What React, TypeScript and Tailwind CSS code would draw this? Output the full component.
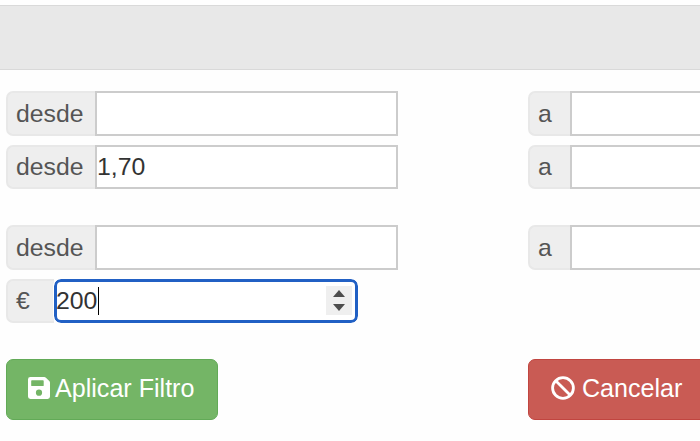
type FieldProps = {
    label: string;
    value?: string;
};

const Addon = ({ label }: { label: string }) => (
    <span className="flex h-full shrink-0 items-center rounded-l-[7px] border-2 border-r-0 border-[#e8e8e8] bg-[#eeeeee] pt-0.5 pl-2 text-[#555555]">
        {label}
    </span>
);

const FromField = ({ label, value }: FieldProps) => (
    <div className="grid h-[44.5px] w-[392px] grid-cols-[89px_1fr]">
        <Addon label={label} />
        <div className="flex items-center border-2 border-[#cccccc] bg-white pt-0.5 text-[#333333]">{value}</div>
    </div>
);

const ToField = ({ label }: FieldProps) => (
    <div className="grid h-[44.5px] w-[393px] grid-cols-[42px_1fr]">
        <Addon label={label} />
        <div className="border-2 border-[#cccccc] bg-white" />
    </div>
);

const SaveIcon = () => (
    <svg viewBox="0 0 22 22" className="h-[22px] w-[22px] shrink-0" fill="currentColor" fillRule="evenodd">
        <path d="M2.4 0H16.2Q17.2 0 17.9 .7L21.3 4.1Q22 4.8 22 5.8V19.6Q22 22 19.6 22H2.4Q0 22 0 19.6V2.4Q0 0 2.4 0ZM3.9 3.2Q3.2 3.2 3.2 3.9V8.4Q3.2 9.1 3.9 9.1H15Q15.7 9.1 15.7 8.4V3.9Q15.7 3.2 15 3.2ZM11 12.6A3.1 3.1 0 1 0 11 18.8A3.1 3.1 0 1 0 11 12.6Z" />
    </svg>
);

const BanIcon = () => (
    <svg viewBox="0 0 24 24" className="h-6 w-6 shrink-0" fill="none" stroke="currentColor" strokeWidth="2.8">
        <circle cx="12" cy="12" r="10.4" />
        <path d="M4.7 4.7L19.3 19.3" />
    </svg>
);

const PriceField = () => (
    <div className="flex h-[44.5px] w-[352px]">
        <div className="w-12">
            <Addon label="€" />
        </div>
        <div className="flex flex-1 items-center justify-between rounded-[7px] border-[3px] border-[#2160c4] bg-white pr-[3px] text-[#333333] outline outline-white">
            <div className="flex items-center">
                <span className="-ml-px pt-px">200</span>
                <span className="ml-px h-7 w-px bg-black" />
            </div>
            <div className="flex h-[29px] w-[26px] flex-col items-center justify-center gap-[7px] bg-[#efefef] text-[#4d4d4d]">
                <svg viewBox="0 0 12 7" className="h-[7px] w-3" fill="currentColor">
                    <path d="M6 0L12 7H0Z" />
                </svg>
                <svg viewBox="0 0 12 7" className="h-[7px] w-3" fill="currentColor">
                    <path d="M0 0H12L6 7Z" />
                </svg>
            </div>
        </div>
    </div>
);

export default function App() {
    return (
        <main className="h-[441px] w-[700px] overflow-hidden bg-[#fefefe] pt-[5px] font-['Liberation_Sans',Arial,sans-serif] text-[24.8px] leading-none">
            <div className="h-[65px] border-y border-[#d9d9d9] bg-[#e8e8e8]" />

            <form className="grid grid-cols-[522px_393px] pt-[21px] pl-1.5">
                <FromField label="desde" />
                <ToField label="a" />
                <div className="pt-[9px]">
                    <FromField label="desde" value="1,70" />
                </div>
                <div className="pt-[9px]">
                    <ToField label="a" />
                </div>
                <div className="pt-9">
                    <FromField label="desde" />
                </div>
                <div className="pt-9">
                    <ToField label="a" />
                </div>
                <div className="col-span-2 pt-[9px]">
                    <PriceField />
                </div>

                <div className="pt-9">
                    <button
                        type="button"
                        className="flex h-[61px] w-[212px] items-center gap-[5px] rounded-[7px] border border-[#62aa57] bg-[#74b566] pb-1 pl-[21px] text-[25.1px] text-white"
                    >
                        <SaveIcon />
                        <span className="pt-[3px]">Aplicar Filtro</span>
                    </button>
                </div>
                <div className="pt-9">
                    <button
                        type="button"
                        className="flex h-[61px] w-[213px] items-center gap-[7px] rounded-[7px] border border-[#c14540] bg-[#c95b54] pb-1 pl-[22px] text-[25.1px] text-white"
                    >
                        <BanIcon />
                        <span className="pt-[3px]">Cancelar</span>
                    </button>
                </div>
            </form>
        </main>
    );
}
